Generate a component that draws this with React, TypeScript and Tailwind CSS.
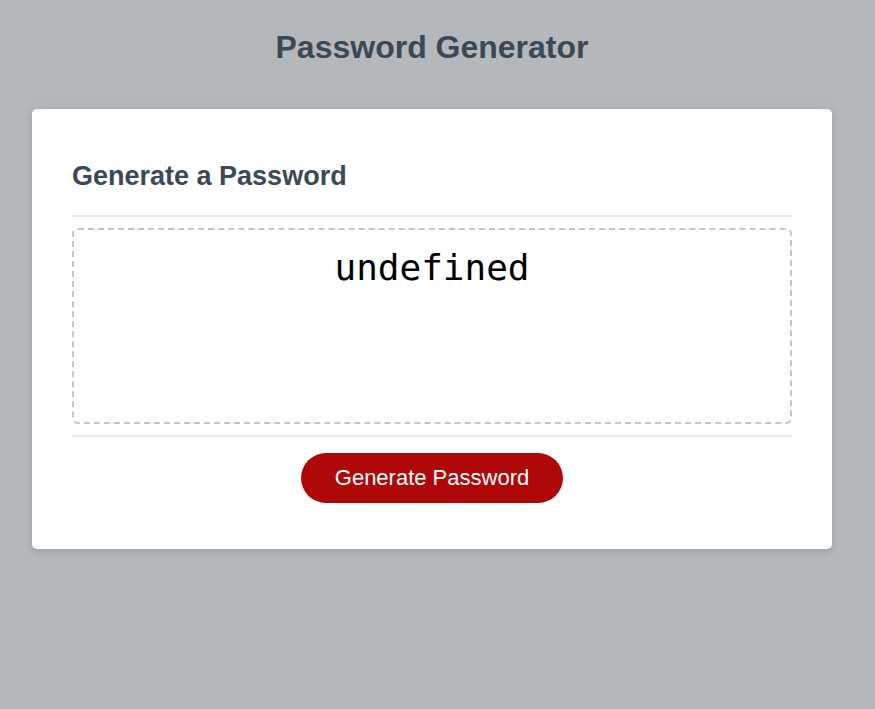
import React from "react";

export default function App() {
  return (
    <div className="min-h-[709px] w-full bg-[#b5b8bb] font-['Liberation_Sans',Arial,sans-serif]">
      <div className="ml-[32px] w-[800px] pt-[29px]">
        <h1 className="text-center text-[32px] leading-[37px] font-bold text-[#3b4954]">
          Password Generator
        </h1>
        <div className="mt-[43px] rounded-[5px] bg-white px-[40px] pt-[52px] pb-[46px] text-[#3b4954] shadow-[0_2px_8px_0_rgba(0,0,0,0.15)]">
          <h2 className="text-[27px] leading-[31px] font-bold">Generate a Password</h2>
          <div className="mt-[23px] h-[2px] w-full bg-[#e7e9eb]" />
          <div className="mt-[11px] h-[196px] w-full rounded-[6px] border-2 border-dashed border-[#c0c7cf] pt-[17px] text-center font-['DejaVu_Sans_Mono',monospace] text-[36px] leading-[42px] text-black">
            undefined
          </div>
          <div className="mt-[11px] h-[2px] w-full bg-[#e7e9eb]" />
          <div className="mt-[16px] flex justify-center">
            <button className="h-[50px] rounded-[25px] bg-[#af0808] px-[34px] text-[22px] leading-[22px] text-white">
              Generate Password
            </button>
          </div>
        </div>
      </div>
    </div>
  );
}
